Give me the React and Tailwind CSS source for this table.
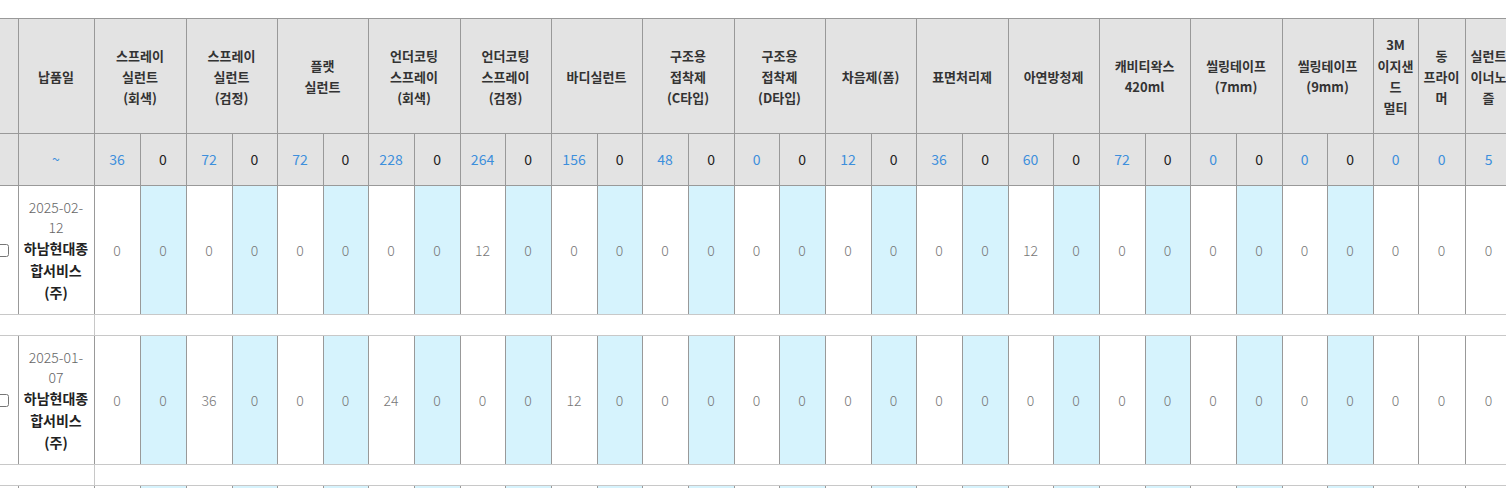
import React from 'react';

const groups = [
  ['스프레이', '실런트', '(회색)'],
  ['스프레이', '실런트', '(검정)'],
  ['플랫', '실런트'],
  ['언더코팅', '스프레이', '(회색)'],
  ['언더코팅', '스프레이', '(검정)'],
  ['바디실런트'],
  ['구조용', '접착제', '(C타입)'],
  ['구조용', '접착제', '(D타입)'],
  ['차음제(폼)'],
  ['표면처리제'],
  ['아연방청제'],
  ['캐비티왁스', '420ml'],
  ['씰링테이프', '(7mm)'],
  ['씰링테이프', '(9mm)'],
];

// narrow columns, wrapped the same way the original does
const singles = [
  ['3M', '이지샌', '드', '멀티'],
  ['동', '프라이', '머'],
  ['실런트', '이너노', '즐'],
];

const widthClass = {
  45: 'w-[45px]',
  46: 'w-[46px]',
  47: 'w-[47px]',
};

const subWidths = [
  46, 46, 46, 45, 46, 45, 46, 46, 45, 46, 46, 45, 46, 46,
  45, 46, 46, 45, 46, 46, 45, 46, 46, 45, 46, 46, 45, 46,
];
const singleWidths = [45, 47, 47];

const summary = [36, 0, 72, 0, 72, 0, 228, 0, 264, 0, 156, 0, 48, 0, 0, 0, 12, 0, 36, 0, 60, 0, 72, 0, 0, 0, 0, 0];
const summarySingles = [0, 0, 5];

const rows = [
  {
    date: ['2025-02-', '12'],
    company: '하남현대종합서비스(주)',
    values: [0, 0, 0, 0, 0, 0, 0, 0, 12, 0, 0, 0, 0, 0, 0, 0, 0, 0, 0, 0, 12, 0, 0, 0, 0, 0, 0, 0],
    extra: [0, 0, 0],
  },
  {
    date: ['2025-01-', '07'],
    company: '하남현대종합서비스(주)',
    values: [0, 0, 36, 0, 0, 0, 24, 0, 0, 0, 12, 0, 0, 0, 0, 0, 0, 0, 0, 0, 0, 0, 0, 0, 0, 0, 0, 0],
    extra: [0, 0, 0],
  },
  {
    date: ['2024-12-', '20'],
    company: '하남현대종합서비스(주)',
    values: [0, 0, 0, 0, 0, 0, 0, 0, 0, 0, 0, 0, 0, 0, 0, 0, 0, 0, 0, 0, 0, 0, 0, 0, 0, 0, 0, 0],
    extra: [0, 0, 0],
  },
];

const headCell = 'bg-[#e3e3e3] border border-[#999] text-[#333] text-[13px] font-bold leading-[21px] text-center align-middle';
const sumCell = 'bg-[#e3e3e3] border border-[#999] text-[14px] text-center align-middle';
const dataCell = 'border-x border-y border-x-[#999] border-y-[#c8c8c8] text-[14px] font-light text-[#777] text-center align-middle';

function DataRow({ row }) {
  return (
    <tr className="h-[129px]">
      <td className={`${dataCell} border-l-0 p-0`}>
        <input type="checkbox" className="block -ml-[4px] w-[13px] h-[13px]" />
      </td>
      <td className={`${dataCell} px-[2px]`}>
        <div className="text-[#666] leading-[20px]">
          {row.date[0]}
          <br />
          {row.date[1]}
        </div>
        <div className="font-bold text-[#222] leading-[22px] break-all">{row.company}</div>
      </td>
      {row.values.map((v, i) => (
        <td key={i} className={`${dataCell} ${i % 2 === 1 ? 'bg-[#d6f3fd]' : 'bg-white'}`}>
          {v}
        </td>
      ))}
      {row.extra.map((v, i) => (
        <td key={`e${i}`} className={dataCell}>
          {v}
        </td>
      ))}
    </tr>
  );
}

function SpacerRow() {
  return (
    <tr className="h-[21px]">
      <td colSpan={2} className="border-y border-r border-[#c8c8c8]" />
      <td colSpan={31} className="border-y border-[#c8c8c8]" />
    </tr>
  );
}

export default function App() {
  return (
    <div
      className="w-[1506px] h-[488px] overflow-hidden bg-white pt-[18px]"
      style={{ fontFamily: '"Noto Sans CJK KR", "Noto Sans", sans-serif' }}
    >
      <table className="table-fixed border-collapse w-[1512px]">
        <colgroup>
          <col className="w-[18px]" />
          <col className="w-[76px]" />
          {subWidths.map((w, i) => (
            <col key={i} className={widthClass[w]} />
          ))}
          {singleWidths.map((w, i) => (
            <col key={`s${i}`} className={widthClass[w]} />
          ))}
        </colgroup>
        <thead>
          <tr className="h-[115px]">
            <th className={`${headCell} border-l-0`} />
            <th className={`${headCell} px-[2px]`}>납품일</th>
            {groups.map((lines, i) => (
              <th key={i} colSpan={2} className={`${headCell} px-[2px]`}>
                {lines.map((l, j) => (
                  <div key={j}>{l}</div>
                ))}
              </th>
            ))}
            {singles.map((lines, i) => (
              <th key={`s${i}`} className={`${headCell} px-0 whitespace-nowrap`}>
                {lines.map((l, j) => (
                  <div key={j}>{l}</div>
                ))}
              </th>
            ))}
          </tr>
          <tr className="h-[52px]">
            <td className={`${sumCell} border-l-0`} />
            <td className={`${sumCell} text-[#3d8fdc]`}>~</td>
            {summary.map((v, i) => (
              <td key={i} className={`${sumCell} ${i % 2 === 0 ? 'text-[#3d8fdc]' : 'text-[#222]'}`}>
                {v}
              </td>
            ))}
            {summarySingles.map((v, i) => (
              <td key={`s${i}`} className={`${sumCell} text-[#3d8fdc]`}>
                {v}
              </td>
            ))}
          </tr>
        </thead>
        <tbody>
          {rows.map((row, i) => (
            <React.Fragment key={i}>
              <DataRow row={row} />
              <SpacerRow />
            </React.Fragment>
          ))}
        </tbody>
      </table>
    </div>
  );
}
